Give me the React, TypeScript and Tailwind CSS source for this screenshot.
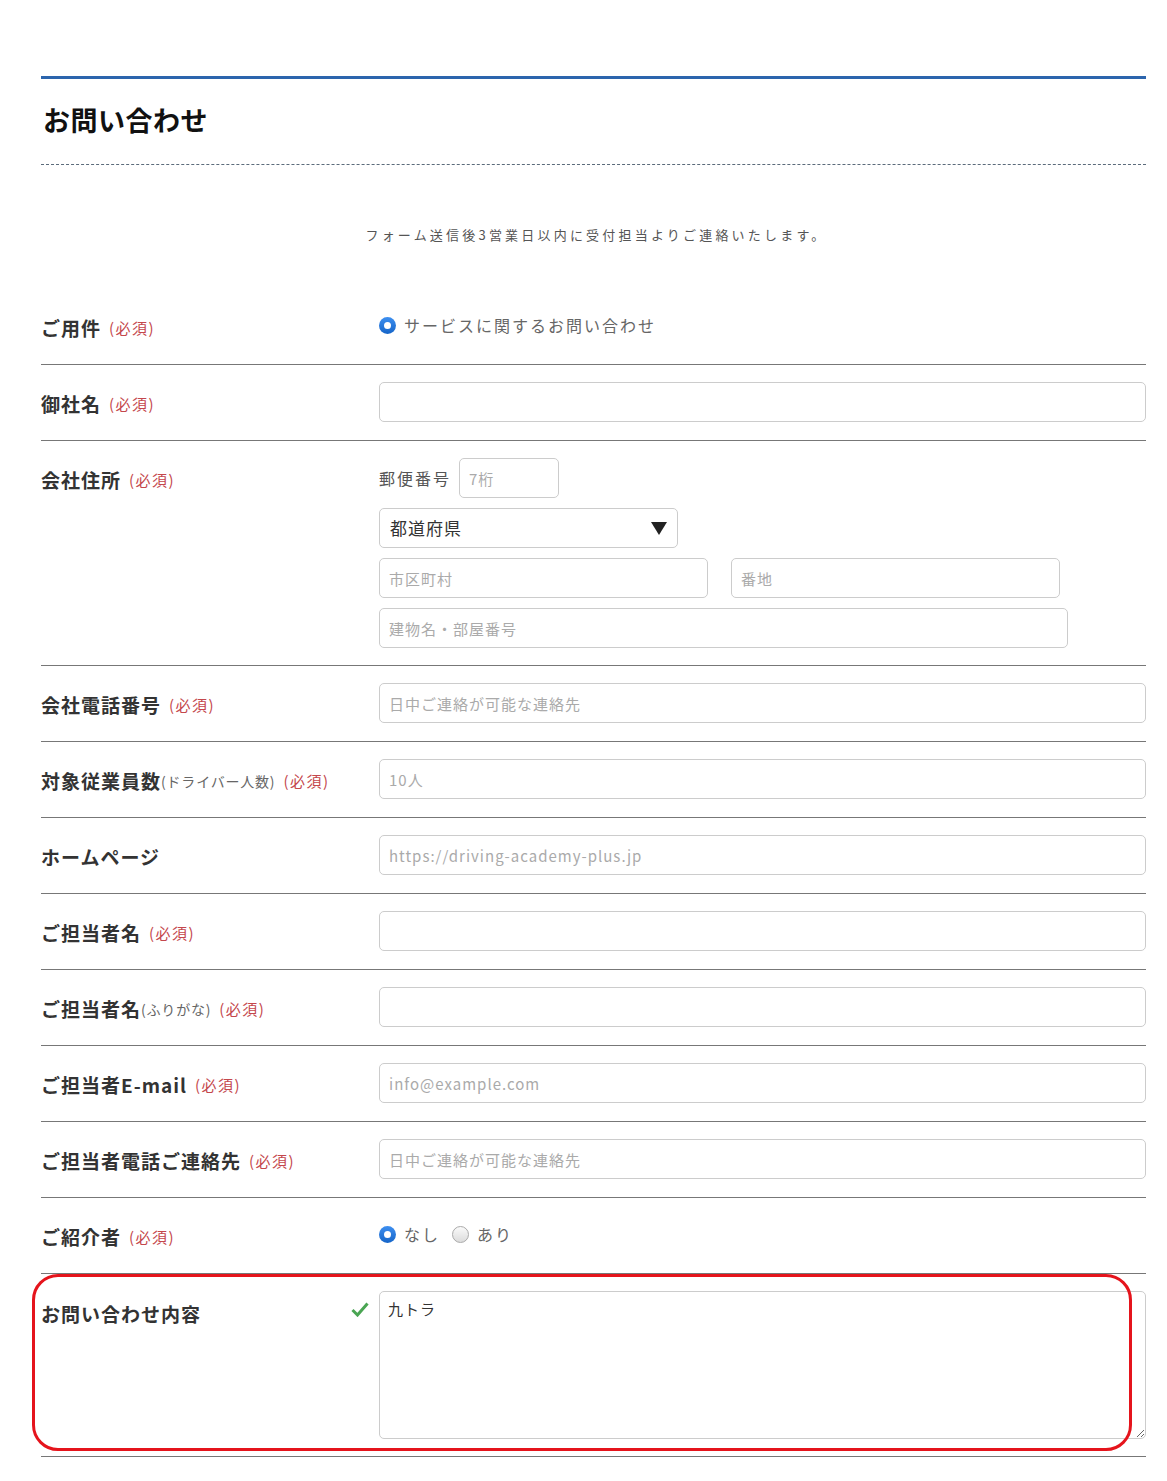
import type { ReactNode } from "react";

const FONT = { fontFamily: '"Noto Sans CJK JP", "Noto Sans", sans-serif' };

function Req() {
  return <span className="ml-[8px] text-[15px] font-normal tracking-[1.5px] text-[#c4474c]">(必須)</span>;
}

function Label({ text, sub, req = true }: { text: string; sub?: string; req?: boolean }) {
  return (
    <div className="flex h-[40px] items-center pt-[5px] text-[19px] font-bold tracking-[1px] text-[#333]">
      <span>{text}</span>
      {sub && <span className="text-[14px] font-normal tracking-[0.8px] text-[#666]">{sub}</span>}
      {req && <Req />}
    </div>
  );
}

function Row({ label, children, extra, pb = "pb-[18px]" }: { label: ReactNode; children: ReactNode; extra?: ReactNode; pb?: string }) {
  return (
    <div className={`relative flex items-start border-b border-[#777] pt-[17px] ${pb}`}>
      <div className="flex w-[338px] shrink-0 items-start justify-between pr-[10px]">{label}</div>
      <div className="flex-1">{children}</div>
      {extra}
    </div>
  );
}

function Input({ placeholder = "", className = "w-full" }: { placeholder?: string; className?: string }) {
  return (
    <input
      placeholder={placeholder}
      className={`h-[40px] rounded-[5px] border border-[#ccc] bg-white px-[9px] text-[15px] tracking-[1px] text-[#333] outline-none placeholder:text-[#aaa] ${className}`}
    />
  );
}

function Radio({ checked, label }: { checked: boolean; label: string }) {
  return (
    <label className="flex items-center gap-[8px] text-[16px] tracking-[2px] text-[#666]">
      {checked ? (
        <span className="flex h-[17px] w-[17px] items-center justify-center rounded-full bg-gradient-to-b from-[#3d8ff0] to-[#1565c8]">
          <span className="h-[7px] w-[7px] rounded-full bg-white" />
        </span>
      ) : (
        <span className="h-[17px] w-[17px] rounded-full border border-[#aaa] bg-gradient-to-b from-[#fafafa] to-[#dcdcdc]" />
      )}
      <span>{label}</span>
    </label>
  );
}

export default function App() {
  return (
    <div className="min-h-screen bg-white pb-[24px]" style={FONT}>
      <div className="ml-[41px] w-[1105px] pt-[76px]">
        <div className="border-t-[3px] border-[#2c65ad]" />
        <h2 className="border-b border-dashed border-[#5b6b7b] pb-[26px] pl-[2px] pt-[23px] text-[27px] font-bold leading-[36px] tracking-[0.5px] text-[#111]">
          お問い合わせ
        </h2>

        <p className="ml-[6px] mt-[60px] text-center text-[13px] leading-[20px] tracking-[3.2px] text-[#555]">
          フォーム送信後3営業日以内に受付担当よりご連絡いたします。
        </p>

        <form className="mt-[44px]">
          <Row label={<Label text="ご用件" />}>
            <div className="flex h-[40px] items-center pb-[2px]">
              <Radio checked label="サービスに関するお問い合わせ" />
            </div>
          </Row>

          <Row label={<Label text="御社名" />}>
            <Input />
          </Row>

          <Row label={<Label text="会社住所" />} pb="pb-[17px]">
            <div className="flex flex-col gap-[10px]">
              <div className="flex items-center gap-[8px]">
                <span className="text-[16px] tracking-[2px] text-[#555]">郵便番号</span>
                <Input placeholder="7桁" className="w-[100px]" />
              </div>
              <div className="flex h-[40px] w-[299px] items-center justify-between rounded-[5px] border border-[#ccc] pl-[10px] pr-[10px] text-[17px] tracking-[1px] text-[#333]">
                <span>都道府県</span>
                <svg width="16" height="13" viewBox="0 0 16 13">
                  <path d="M0 0 H16 L8 13 Z" fill="#222" />
                </svg>
              </div>
              <div className="flex gap-[23px]">
                <Input placeholder="市区町村" className="w-[329px]" />
                <Input placeholder="番地" className="w-[329px]" />
              </div>
              <Input placeholder="建物名・部屋番号" className="w-[689px]" />
            </div>
          </Row>

          <Row label={<Label text="会社電話番号" />}>
            <Input placeholder="日中ご連絡が可能な連絡先" />
          </Row>

          <Row label={<Label text="対象従業員数" sub="(ドライバー人数)" />}>
            <Input placeholder="10人" />
          </Row>

          <Row label={<Label text="ホームページ" req={false} />}>
            <Input placeholder="https://driving-academy-plus.jp" />
          </Row>

          <Row label={<Label text="ご担当者名" />}>
            <Input />
          </Row>

          <Row label={<Label text="ご担当者名" sub="(ふりがな)" />}>
            <Input />
          </Row>

          <Row label={<Label text="ご担当者E-mail" />}>
            <Input placeholder="info@example.com" />
          </Row>

          <Row label={<Label text="ご担当者電話ご連絡先" />}>
            <Input placeholder="日中ご連絡が可能な連絡先" />
          </Row>

          <Row label={<Label text="ご紹介者" />}>
            <div className="flex h-[40px] items-center gap-[12px] pb-[2px]">
              <Radio checked label="なし" />
              <Radio checked={false} label="あり" />
            </div>
          </Row>

          <Row
            pb="pb-[17px]"
            label={
              <>
                <div className="flex h-[46px] items-center text-[19px] font-bold tracking-[1px] text-[#333]">
                  お問い合わせ内容
                </div>
                <svg width="18" height="15" viewBox="0 0 18 15" className="mt-[11px]">
                  <path d="M1.5 8 L6.5 13 L16.5 1.5" fill="none" stroke="#4aa553" strokeWidth="3" />
                </svg>
              </>
            }
            extra={
              <div className="pointer-events-none absolute left-[-9px] top-0 h-[177px] w-[1100px] rounded-[26px] border-[3px] border-[#e5141c]" />
            }
          >
            <textarea
              defaultValue="九トラ"
              className="block h-[148px] w-full rounded-[5px] border border-[#ccc] px-[8px] py-[6px] text-[15px] tracking-[1px] text-[#333] outline-none"
            />
          </Row>
        </form>
      </div>
    </div>
  );
}
